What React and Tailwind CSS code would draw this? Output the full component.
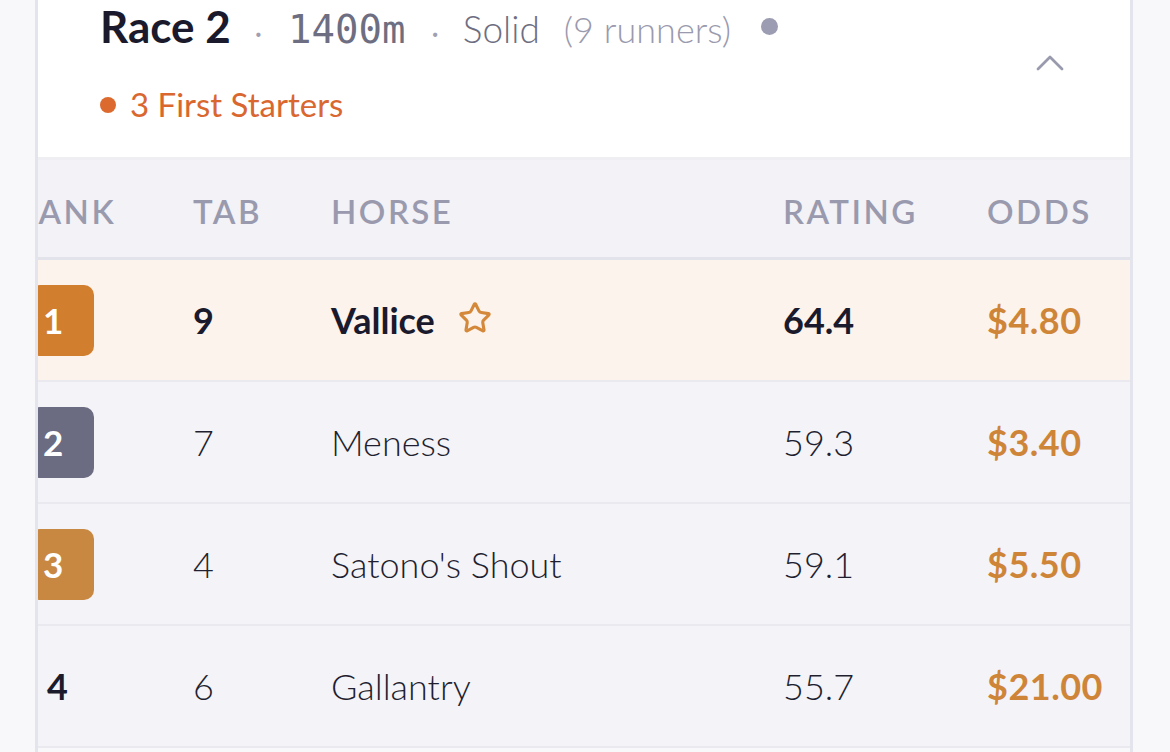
import React from "react";
import { ChevronUp, Star } from "lucide-react";

// Race card — zoomed mobile view, table scrolled a little to the right
const runners = [
  { rank: 1, tab: 9, horse: "Vallice", rating: "64.4", odds: "$4.80", top: true },
  { rank: 2, tab: 7, horse: "Meness", rating: "59.3", odds: "$3.40" },
  { rank: 3, tab: 4, horse: "Satono's Shout", rating: "59.1", odds: "$5.50" },
  { rank: 4, tab: 6, horse: "Gallantry", rating: "55.7", odds: "$21.00" },
];

const badgeColor = {
  1: "bg-[#d17f2e]",
  2: "bg-[#6b6b81]",
  3: "bg-[#c98841]",
};

const cols = "grid grid-cols-[193px_138px_452px_204px_1fr] items-center";

function RankCell({ rank }) {
  if (badgeColor[rank]) {
    return (
      <div
        className={`ml-[30px] flex h-[71px] w-[64px] items-center rounded-[10px] pl-[13px] text-[35px] font-bold text-white ${badgeColor[rank]}`}
      >
        {rank}
      </div>
    );
  }
  return <div className="pl-[47px] text-[36px] font-bold text-[#1b1b2c]">{rank}</div>;
}

export default function App() {
  return (
    <div
      className="h-[752px] w-full overflow-hidden bg-[#f8f8fa] pl-[35px] pr-[37px]"
      style={{ fontFamily: "Lato, 'Noto Sans', sans-serif" }}
    >
      <div className="h-full overflow-hidden border-x-[3px] border-[#e4e4ec]">
        {/* Race header */}
        <header className="flex border-b-[3px] border-[#eeeef3] bg-white pb-[33px] pl-[62px] pr-[56px]">
          <div className="flex-1">
            <div className="flex items-baseline leading-[1.2]">
              <span className="text-[44px] font-bold text-[#1a1a2c]">Race 2</span>
              <span className="ml-[24px] mr-[26px] text-[28px] text-[#a0a0b2]">·</span>
              <span
                className="text-[39px] text-[#6e6e82]"
                style={{ fontFamily: "'DejaVu Sans Mono', monospace" }}
              >
                1400m
              </span>
              <span className="ml-[26px] mr-[24px] text-[28px] text-[#a0a0b2]">·</span>
              <span className="text-[37px] font-light text-[#6e6e82]">Solid</span>
              <span className="ml-[24px] text-[36px] font-light text-[#9a9aae]">(9 runners)</span>
              <span className="ml-[30px] h-[17px] w-[17px] self-center rounded-full bg-[#9c9cb2]" />
            </div>
            <div className="mt-[31px] flex items-center leading-[1.2]">
              <span className="mr-[14px] h-[16px] w-[16px] rounded-full bg-[#dc6a2e]" />
              <span className="text-[33px] text-[#d9672f]">3 First Starters</span>
            </div>
          </div>
          <div className="pt-[39px]">
            <ChevronUp size={48} strokeWidth={1.4} className="text-[#9a9aae]" />
          </div>
        </header>

        {/* Runners table */}
        <div className="-ml-[38px]">
          <div
            className={`${cols} h-[100px] border-b-[3px] border-[#e3e3eb] bg-[#f2f2f7] pt-[6px] text-[33px] font-semibold tracking-[2.5px] text-[#9a9aae]`}
          >
            <div className="pl-[15px]">RANK</div>
            <div>TAB</div>
            <div>HORSE</div>
            <div>RATING</div>
            <div>ODDS</div>
          </div>

          {runners.map((r) => (
            <div
              key={r.rank}
              className={`${cols} h-[122px] border-b-2 border-[#e9e9ef] text-[36px] ${
                r.top ? "bg-[#fcf3ec]" : "bg-[#f3f3f8]"
              }`}
            >
              <RankCell rank={r.rank} />
              <div className={r.top ? "font-bold text-[#1a1a2c]" : "font-light text-[#1f1f30]"}>{r.tab}</div>
              <div className="flex items-center">
                <span className={r.top ? "font-bold text-[#1a1a2c]" : "font-light text-[#1f1f30]"}>{r.horse}</span>
                {r.top && <Star size={34} strokeWidth={2.2} className="ml-[23px] -mt-[4px] text-[#d4883a]" />}
              </div>
              <div className={r.top ? "font-bold text-[#1a1a2c]" : "font-light text-[#1f1f30]"}>{r.rating}</div>
              <div className="font-bold tracking-[0.5px] text-[#cf8538]">{r.odds}</div>
            </div>
          ))}
        </div>
      </div>
    </div>
  );
}
